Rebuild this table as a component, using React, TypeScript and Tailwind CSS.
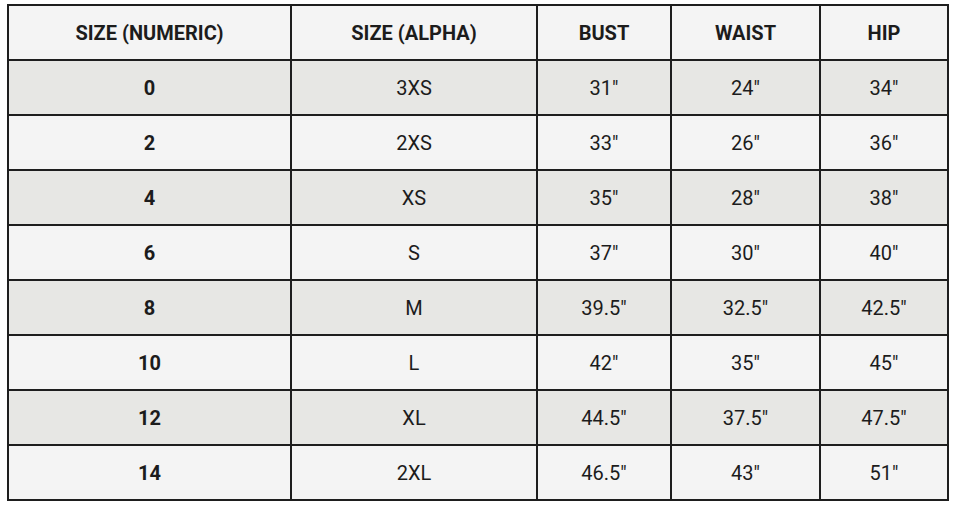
const headers = ["SIZE (NUMERIC)", "SIZE (ALPHA)", "BUST", "WAIST", "HIP"];

const rows = [
  ["0", "3XS", "31″", "24″", "34″"],
  ["2", "2XS", "33″", "26″", "36″"],
  ["4", "XS", "35″", "28″", "38″"],
  ["6", "S", "37″", "30″", "40″"],
  ["8", "M", "39.5″", "32.5″", "42.5″"],
  ["10", "L", "42″", "35″", "45″"],
  ["12", "XL", "44.5″", "37.5″", "47.5″"],
  ["14", "2XL", "46.5″", "43″", "51″"],
];

const widths = [283, 246, 134, 149, 128];

export default function App() {
  return (
    <div className="h-[509px] w-[960px] bg-white pl-[7px] pt-[4px] font-['Roboto',sans-serif] text-[20px] text-[#1c1c1c]">
      <table className="w-[940px] table-fixed border-collapse border-2 border-[#1e1e1e]">
        <colgroup>
          {widths.map((w, i) => (
            <col key={i} style={{ width: w }} />
          ))}
        </colgroup>
        <thead>
          <tr className="h-[55px] bg-[#f4f4f4]">
            {headers.map((h) => (
              <th key={h} className="border-2 border-[#1e1e1e] text-center font-bold">
                {h}
              </th>
            ))}
          </tr>
        </thead>
        <tbody>
          {rows.map((r, i) => (
            <tr key={r[0]} className={i % 2 === 0 ? "h-[55px] bg-[#e7e7e4]" : "h-[55px] bg-[#f4f4f4]"}>
              {r.map((c, j) => (
                <td key={j} className={j === 0 ? "border-2 border-[#1e1e1e] text-center font-bold" : "border-2 border-[#1e1e1e] text-center"}>
                  {c}
                </td>
              ))}
            </tr>
          ))}
        </tbody>
      </table>
    </div>
  );
}
